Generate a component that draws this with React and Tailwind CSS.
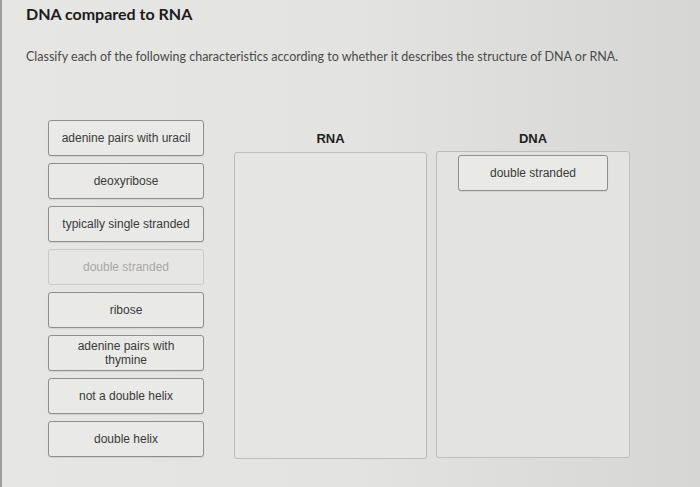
import React from "react";

const items = [
  { t: "adenine pairs with uracil" },
  { t: "deoxyribose" },
  { t: "typically single stranded" },
  { t: "double stranded", disabled: true },
  { t: "ribose" },
  { t: "adenine pairs with thymine", wrap: true },
  { t: "not a double helix" },
  { t: "double helix" },
];

function Card({ children, disabled, className = "" }) {
  return (
    <div
      className={
        "h-[36px] flex items-center justify-center text-center rounded-[3px] border text-[12px] leading-[14px] " +
        (disabled
          ? "border-[#cacac8] text-[#a8a8a8] bg-[#e6e6e4]"
          : "border-[#8e8e8c] text-[#3a3a3a] bg-[#e9e9e7] shadow-[0_1px_1px_rgba(0,0,0,0.08)]") +
        " " +
        className
      }
    >
      {children}
    </div>
  );
}

export default function App() {
  return (
    <div
      className="w-[700px] h-[487px] overflow-hidden border-l-2 border-[#9d9d9b] bg-linear-to-r from-[#e6e6e4] via-[#e3e4e2] to-[#d6d7d5] pl-[24px]"
      style={{ fontFamily: '"Liberation Sans", Arial, sans-serif' }}
    >
      <div
        className="pt-[4px] text-[16px] leading-[20px] font-bold text-[#1b1b1b]"
        style={{ fontFamily: 'Lato, "Open Sans", sans-serif' }}
      >
        DNA compared to RNA
      </div>
      <div
        className="mt-[24px] text-[12.5px] leading-[17px] text-[#4a4a4a]"
        style={{ fontFamily: 'Lato, "Open Sans", sans-serif' }}
      >
        Classify each of the following characteristics according to whether it describes the structure of DNA or RNA.
      </div>

      <div className="flex mt-[55px]">
        <div className="ml-[22px] w-[156px] flex flex-col gap-[7px]">
          {items.map((it, i) => (
            <Card key={i} disabled={it.disabled}>
              {it.wrap ? (
                <span>
                  adenine pairs with
                  <br />
                  thymine
                </span>
              ) : (
                it.t
              )}
            </Card>
          ))}
        </div>

        <div className="ml-[30px] w-[193px] flex flex-col">
          <div className="pt-[11px] h-[32px] text-center text-[13px] leading-[16px] font-bold text-[#1e1e1e]">
            RNA
          </div>
          <div className="h-[307px] rounded-[3px] border border-[#bdbdbb] bg-[#e5e6e4]" />
        </div>

        <div className="ml-[9px] w-[194px] flex flex-col">
          <div className="pt-[11px] h-[31px] text-center text-[13px] leading-[16px] font-bold text-[#1e1e1e]">
            DNA
          </div>
          <div className="h-[307px] rounded-[3px] border border-[#bdbdbb] bg-[#e3e4e2] pt-[3px] px-[21px]">
            <Card>double stranded</Card>
          </div>
        </div>
      </div>
    </div>
  );
}
